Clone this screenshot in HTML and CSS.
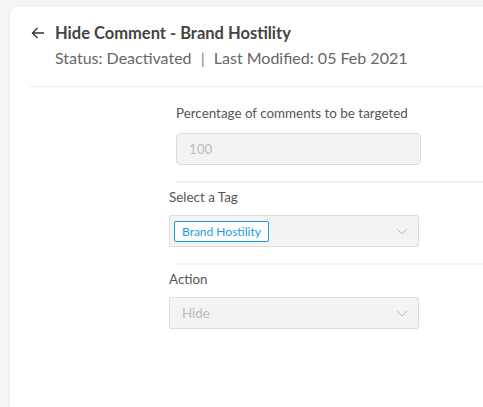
FILE: index.html
```html
<!DOCTYPE html>
<html lang="en">
<head>
  <meta charset="UTF-8">
  <meta name="viewport" content="width=device-width, initial-scale=1.0">
  <title>Hide Comment - Brand Hostility</title>
  <link rel="stylesheet" href="styles.css">
</head>
<body>
  <div class="card">
    <!-- Header -->
    <div class="header">
      <div class="title-row">
        <svg class="back" width="14" height="12" viewBox="0 0 14 12">
          <path d="M13 6H1.5M6.5 1L1.5 6l5 5" fill="none" stroke="#333" stroke-width="1.3"/>
        </svg>
        <h1>Hide Comment - Brand Hostility</h1>
      </div>
      <p class="meta">Status: Deactivated <span class="sep">|</span> Last Modified: 05 Feb 2021</p>
    </div>
    <hr class="divider">

    <!-- Form -->
    <div class="form">
      <div class="field field-inset">
        <label>Percentage of comments to be targeted</label>
        <div class="input">100</div>
      </div>
      <hr class="rule">

      <div class="field">
        <label>Select a Tag</label>
        <div class="select">
          <span class="chip">Brand Hostility</span>
          <svg class="chevron" width="12" height="7" viewBox="0 0 12 7">
            <path d="M1 1l5 5 5-5" fill="none" stroke="#bbb" stroke-width="1"/>
          </svg>
        </div>
      </div>
      <hr class="rule">

      <div class="field">
        <label>Action</label>
        <div class="select">
          <span class="placeholder">Hide</span>
          <svg class="chevron" width="12" height="7" viewBox="0 0 12 7">
            <path d="M1 1l5 5 5-5" fill="none" stroke="#bbb" stroke-width="1"/>
          </svg>
        </div>
      </div>
    </div>
  </div>
</body>
</html>
```

FILE: styles.css
```css
* {
  margin: 0;
  padding: 0;
  box-sizing: border-box;
  font-family: "Lato", "Open Sans", sans-serif;
}

body {
  background-color: #f4f4f4;
  padding: 7px 0 0 10px;
  overflow: hidden;
}

/* Card */
.card {
  background-color: #fff;
  border-radius: 8px 0 0 0;
  min-height: 420px;
  box-shadow: 0 0 2px rgba(0, 0, 0, 0.06);
}

/* Header */
.header {
  padding: 16px 0 0 21px;
}

.title-row {
  display: flex;
  align-items: center;
  gap: 10px;
}

.back {
  display: block;
}

.title-row h1 {
  font-size: 16.5px;
  font-weight: 700;
  color: #444;
  line-height: 20px;
}

.meta {
  margin: 5px 0 0 24px;
  font-size: 16px;
  color: #666;
  line-height: 20px;
}

.sep {
  margin: 0 5px;
  color: #888;
}

.divider {
  border: none;
  border-top: 1px solid #ececec;
  margin: 18px 0 0 20px;
}

/* Form */
.form {
  margin-left: 159px;
  padding-top: 18px;
}

.field {
  width: 250px;
}

.field-inset {
  padding-left: 7px;
  width: 252px;
}

.field label {
  display: block;
  font-size: 13.4px;
  color: #555;
  line-height: 16px;
}

.input {
  margin-top: 12px;
  height: 32px;
  background-color: #f3f3f3;
  border: 1px solid #ddd;
  border-radius: 4px;
  padding: 0 12px;
  display: flex;
  align-items: center;
  font-size: 13.4px;
  color: #bbb;
}

.rule {
  border: none;
  border-top: 2px solid #f1f1f1;
  margin: 16px 0 6px 7px;
}

.select {
  margin-top: 10px;
  height: 32px;
  background-color: #f3f3f3;
  border: 1px solid #ddd;
  border-radius: 2px;
  padding: 0 10px 0 4px;
  display: flex;
  align-items: center;
  justify-content: space-between;
}

.chip {
  font-size: 12px;
  color: #1a9be0;
  background-color: #fff;
  border: 1px solid #1a9be0;
  border-radius: 2px;
  padding: 2px 7px;
  line-height: 15px;
}

.placeholder {
  font-size: 13.4px;
  color: #bbb;
  padding-left: 8px;
}

.chevron {
  display: block;
}
```
